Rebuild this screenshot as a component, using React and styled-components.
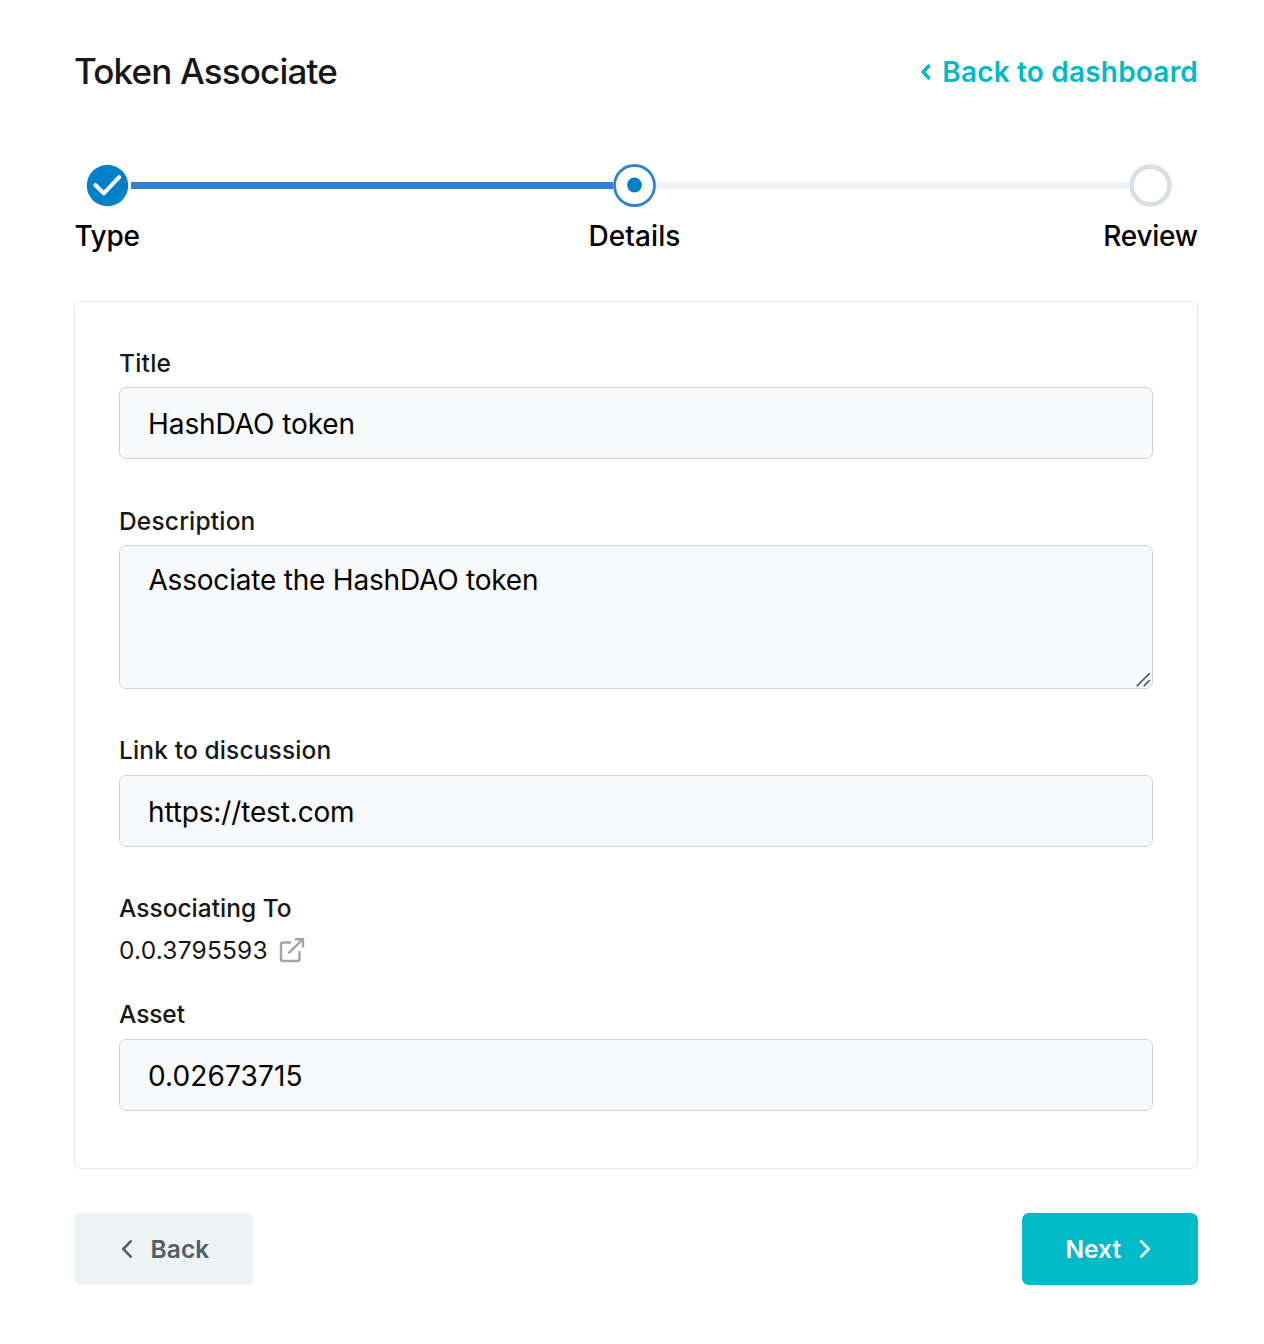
import React from "react";
import styled, { createGlobalStyle } from "styled-components";

const GlobalStyle = createGlobalStyle`
  *, *::before, *::after { box-sizing: border-box; }
  body {
    margin: 0;
    background: #ffffff;
    font-family: Inter, "Liberation Sans", sans-serif;
  }
`;

const Page = styled.main`
  width: 1264px;
  height: 1344px;
  padding: 48px 66px 0 74px;
  display: flex;
  flex-direction: column;
`;

const Header = styled.header`
  height: 48px;
  display: flex;
  align-items: center;
  justify-content: space-between;
`;

const PageTitle = styled.h1`
  margin: 0 0 3px;
  font-size: 35px;
  font-weight: 500;
  line-height: 46px;
  letter-spacing: -0.84px;
  color: #171717;
  white-space: nowrap;
`;

const DashboardLink = styled.a`
  display: flex;
  align-items: center;
  gap: 11px;
  font-size: 28px;
  font-weight: 600;
  line-height: 42px;
  letter-spacing: 0.19px;
  color: #00bac6;
  text-decoration: none;
  white-space: nowrap;
`;

const Track = styled.div`
  margin-top: 68px;
  height: 43px;
  padding: 0 26px 0 12px;
  display: flex;
  align-items: center;
`;

const Marker = styled.svg`
  flex: none;
  display: block;
  width: 43px;
  height: 43px;
`;

const Connector = styled.div`
  flex: 0 0 ${(p) => p.$length}px;
  height: 7px;
  margin-left: ${(p) => p.$gap || 0}px;
  background: ${(p) => (p.$done ? "#3182ce" : "#edf2f6")};
`;

const StepLabels = styled.div`
  margin-top: 8px;
  display: flex;
  justify-content: space-between;
`;

const StepLabel = styled.span`
  width: ${(p) => p.$width}px;
  margin-right: ${(p) => p.$after || 0}px;
  text-align: center;
  font-size: 28px;
  font-weight: 500;
  line-height: 42px;
  letter-spacing: ${(p) => p.$track}px;
  color: #000000;
  white-space: nowrap;
`;

const Card = styled.section`
  margin-top: 44px;
  height: 868px;
  padding: 42px 44px 0;
  border: 1px solid #e4e6e7;
  border-radius: 7px;
  display: flex;
  flex-direction: column;
`;

const Field = styled.div`
  display: flex;
  flex-direction: column;
  gap: ${(p) => p.$gap || 5}px;
  margin-bottom: ${(p) => p.$after || 0}px;
`;

const Label = styled.label`
  font-size: 24.5px;
  font-weight: 500;
  line-height: 38px;
  letter-spacing: ${(p) => p.$track || 0}px;
  color: #171717;
  white-space: nowrap;
`;

const Input = styled.input`
  display: block;
  width: 100%;
  height: 72px;
  margin: 0;
  padding: 2px 28px 0;
  border: 1px solid #d0d3d6;
  border-radius: 7px;
  outline: none;
  background: #f8f9fb;
  font-family: inherit;
  font-size: 28px;
  letter-spacing: ${(p) => p.$track || 0}px;
  color: #000000;
`;

const AreaWrap = styled.div`
  position: relative;
  height: 144px;
`;

const TextArea = styled.textarea`
  display: block;
  width: 100%;
  height: 144px;
  margin: 0;
  padding: 14px 28.5px;
  border: 1px solid #d0d3d6;
  border-radius: 7px;
  outline: none;
  resize: none;
  overflow: hidden;
  background: #f8f9fb;
  font-family: inherit;
  font-size: 28px;
  line-height: 40px;
  letter-spacing: -0.2px;
  color: #000000;
`;

const ResizeGrip = styled.svg`
  position: absolute;
  right: 2px;
  bottom: 2px;
  width: 15px;
  height: 15px;
`;

const Account = styled.div`
  display: flex;
  align-items: center;
  gap: 11px;
  height: 38px;
  margin-top: -1px;
  font-size: 24.5px;
  letter-spacing: 0.206px;
  color: #171717;
`;

const Actions = styled.footer`
  margin-top: 44px;
  display: flex;
  justify-content: space-between;
`;

const Button = styled.button`
  width: ${(p) => p.$width}px;
  height: 72px;
  padding: 0 0 0 ${(p) => p.$inset}px;
  border: 0;
  border-radius: 7px;
  display: flex;
  align-items: center;
  gap: ${(p) => p.$gap}px;
  background: ${(p) => (p.$primary ? "#00bac8" : "#edf2f5")};
  color: ${(p) => (p.$primary ? "#ffffff" : "#525f66")};
  font-family: inherit;
  font-size: 24.5px;
  font-weight: 600;
  letter-spacing: ${(p) => p.$track}px;
`;

function Chevron({ right }) {
  return (
    <svg width="12" height="20" viewBox="0 0 12 20" fill="none" stroke="currentColor" strokeWidth="2.6" strokeLinecap="round" strokeLinejoin="round">
      <path d={right ? "M2.3 2.3 9.7 10 2.3 17.7" : "M9.7 2.3 2.3 10 9.7 17.7"} />
    </svg>
  );
}

export default function App() {
  return (
    <>
      <GlobalStyle />
      <Page>
        <Header>
          <PageTitle>Token Associate</PageTitle>
          <DashboardLink>
            <svg width="11" height="16" viewBox="0 0 11 16" fill="none" stroke="currentColor" strokeWidth="3.5">
              <path d="M9.6 1 3.2 8l6.4 7" />
            </svg>
            Back to dashboard
          </DashboardLink>
        </Header>

        <Track>
          <Marker viewBox="0 0 43 43">
            <circle cx="21.5" cy="21.5" r="20.7" fill="#0080c9" />
            <path d="M9.4 21 17.8 29.4 33.2 13.2" fill="none" stroke="#fff" strokeWidth="4" strokeLinecap="round" strokeLinejoin="round" />
          </Marker>
          <Connector $done $length={482} $gap={2} />
          <Marker viewBox="0 0 43 43">
            <circle cx="21.5" cy="21.5" r="20" fill="#fff" stroke="#3182ce" strokeWidth="2.8" />
            <circle cx="21.5" cy="21" r="7.4" fill="#0080c9" />
          </Marker>
          <Connector $length={473} />
          <Marker viewBox="0 0 43 43">
            <circle cx="21.5" cy="21.5" r="18.9" fill="#fff" stroke="#dadfe1" strokeWidth="4.6" />
          </Marker>
        </Track>
        <StepLabels>
          <StepLabel $width={66} $track={-0.3}>Type</StepLabel>
          <StepLabel $width={93} $track={0.078} $after={-26}>Details</StepLabel>
          <StepLabel $width={95} $track={-0.25}>Review</StepLabel>
        </StepLabels>

        <Card>
          <Field $after={43}>
            <Label $track={0.2}>Title</Label>
            <Input defaultValue="HashDAO token" $track={-0.075} />
          </Field>
          <Field $after={42}>
            <Label $track={0.18}>Description</Label>
            <AreaWrap>
              <TextArea defaultValue="Associate the HashDAO token" />
              <ResizeGrip viewBox="0 0 15 15" stroke="#4d4f51" strokeWidth="1.6" fill="none">
                <path d="M.7 14.2 13.7 1.2M7.7 14.2l6-6" />
              </ResizeGrip>
            </AreaWrap>
          </Field>
          <Field $gap={6} $after={42}>
            <Label $track={0.137}>Link to discussion</Label>
            <Input defaultValue="https://test.com" $track={-0.15} />
          </Field>
          <Field $after={26}>
            <Label $track={0}>Associating To</Label>
            <Account>
              0.0.3795593
              <svg width="26" height="26" viewBox="0 0 26 26" fill="none" stroke="#a3a3a3" strokeWidth="2.4" strokeLinejoin="round">
                <path d="M12 5.5H4Q2 5.5 2 7.5V22Q2 24 4 24H18.5Q20.5 24 20.5 22V14" />
                <path d="M9.5 16.3 23.3 2.5M16 2.3H24V10.5" strokeLinejoin="miter" />
              </svg>
            </Account>
          </Field>
          <Field $gap={6}>
            <Label $track={-0.1}>Asset</Label>
            <Input defaultValue="0.02673715" $track={0.12} />
          </Field>
        </Card>

        <Actions>
          <Button $width={179} $inset={47} $gap={17.4} $track={0.15}>
            <Chevron />
            Back
          </Button>
          <Button $primary $width={176} $inset={43.5} $gap={17.5} $track={0}>
            Next
            <Chevron right />
          </Button>
        </Actions>
      </Page>
    </>
  );
}
